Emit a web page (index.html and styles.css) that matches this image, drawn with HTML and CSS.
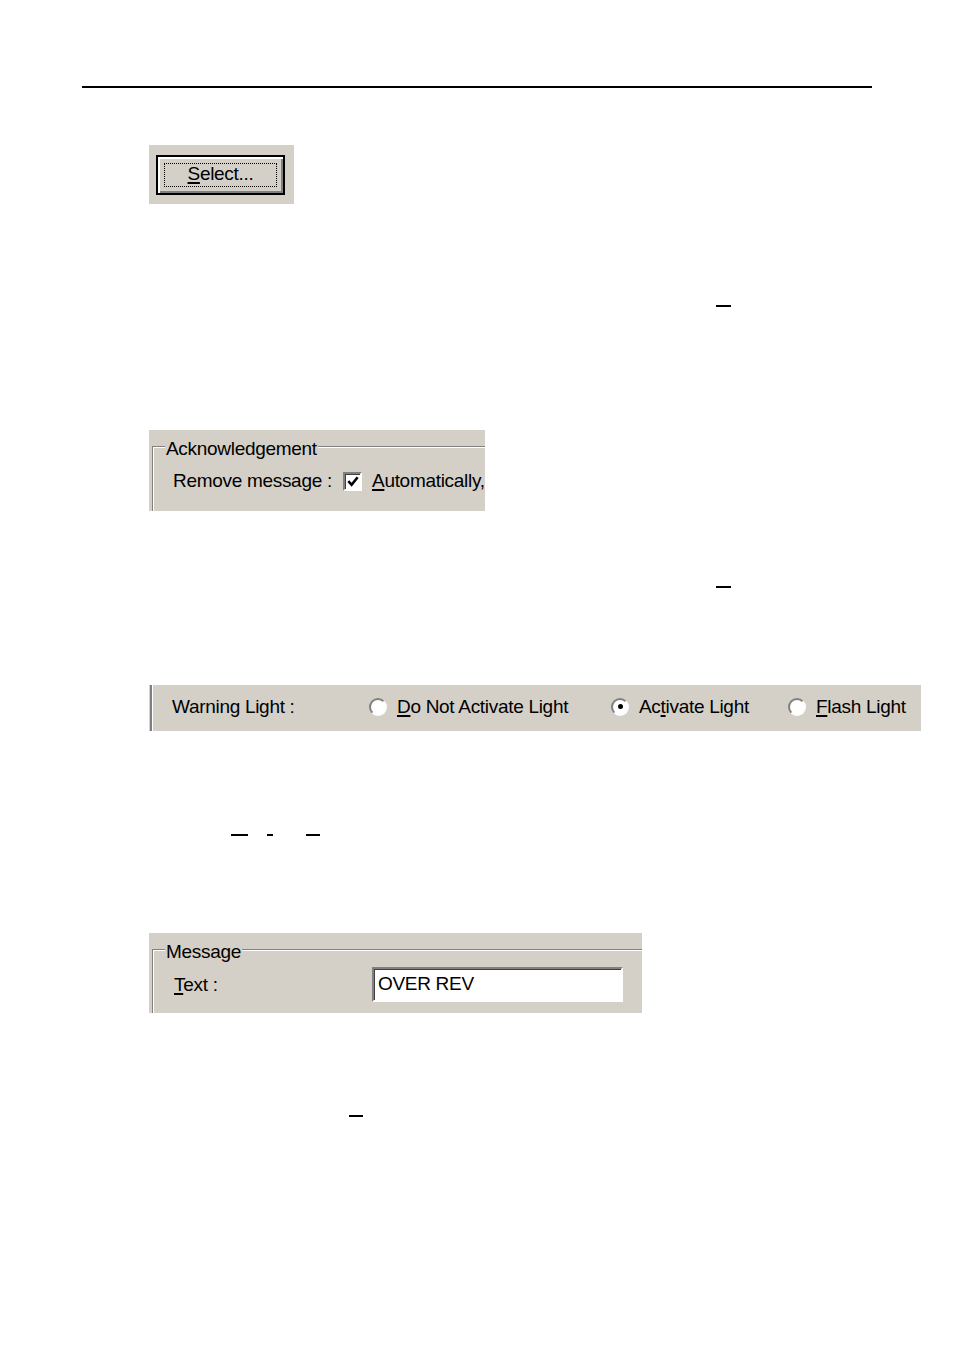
FILE: index.html
```html
<!DOCTYPE html>
<html lang="en">
<head>
<meta charset="utf-8">
<title>Dialog fragments</title>
<link rel="stylesheet" href="styles.css">
</head>
<body>
<div class="page">
  <div class="rule"></div>

  <div class="shot shot-select">
    <div class="btn">
      <div class="btn-focus"><span><u>S</u>elect...</span></div>
    </div>
  </div>

  <div class="marks marks-1"><span class="mark m-a"></span></div>

  <div class="shot shot-ack">
    <div class="group">
      <div class="legend">Acknowledgement</div>
      <div class="row row-ack">
        <span class="label label-ack">Remove message :</span>
        <span class="checkbox">
          <svg width="15" height="15" viewBox="0 0 15 15"><polyline points="2.5,7 6,11 12.5,3" fill="none" stroke="#000" stroke-width="2.8"/></svg>
        </span>
        <span class="check-text"><u>A</u>utomatically,</span>
      </div>
    </div>
  </div>

  <div class="marks marks-2"><span class="mark m-a"></span></div>

  <div class="shot shot-warning">
    <span class="label label-warn">Warning Light :</span>
    <span class="opt opt-1"><span class="radio"></span><span><u>D</u>o Not Activate Light</span></span>
    <span class="opt opt-2"><span class="radio on"></span><span>Ac<u>t</u>ivate Light</span></span>
    <span class="opt opt-3"><span class="radio"></span><span><u>F</u>lash Light</span></span>
  </div>

  <div class="marks marks-3">
    <span class="mark m-b1"></span><span class="mark m-b2"></span><span class="mark m-b3"></span>
  </div>

  <div class="shot shot-msg">
    <div class="group">
      <div class="legend">Message</div>
      <div class="row row-msg">
        <span class="label label-msg"><u>T</u>ext :</span>
        <span class="textbox">OVER REV</span>
      </div>
    </div>
  </div>

  <div class="marks marks-4"><span class="mark m-c"></span></div>
</div>
</body>
</html>
```

FILE: styles.css
```css
html, body {
  margin: 0;
  padding: 0;
  background: #fff;
}

.page {
  width: 954px;
  min-height: 1350px;
  overflow: hidden;
  font-family: "Liberation Sans", Arial, sans-serif;
  font-size: 19px;
  letter-spacing: -0.3px;
  line-height: 20px;
  color: #000;
}

u {
  text-decoration: underline;
  text-underline-offset: 2px;
  text-decoration-thickness: 1.5px;
}

.rule {
  margin: 86px 0 0 82px;
  width: 790px;
  height: 2px;
  background: #000;
}

.shot {
  background: #d4d0c8;
  box-sizing: border-box;
  overflow: hidden;
}

/* Select button */
.shot-select {
  margin: 57px 0 0 149px;
  width: 145px;
  height: 59px;
  padding: 10px 0 0 7px;
}

.btn {
  width: 129px;
  height: 40px;
  box-sizing: border-box;
  border: 2px solid #000;
  box-shadow: inset 2px 2px #fff, inset -2px -2px #808080;
  padding: 6px;
}

.btn-focus {
  height: 100%;
  box-sizing: border-box;
  border: 1px dotted #000;
  display: flex;
  align-items: center;
  justify-content: center;
  padding-bottom: 2px;
}

/* underline marks */
.marks {
  display: flex;
  height: 2px;
}
.mark {
  display: block;
  height: 2px;
  background: #000;
}
.marks-1 { margin-top: 101px; }
.marks-2 { margin-top: 75px; }
.marks-3 { margin-top: 103px; }
.marks-4 { margin-top: 102px; }

.m-a { margin-left: 716px; width: 15px; }
.m-b1 { margin-left: 231px; width: 17px; }
.m-b2 { margin-left: 19px; width: 6px; }
.m-b3 { margin-left: 33px; width: 14px; }
.m-c { margin-left: 349px; width: 14px; }

/* group boxes */
.group {
  margin: 16px 0 0 3px;
  width: 900px;
  height: 200px;
  border-top: 1px solid #808080;
  border-left: 1px solid #808080;
  box-shadow: inset 1px 1px #fff;
}

.legend {
  display: block;
  width: fit-content;
  margin: -8px 0 0 12px;
  padding: 0 1px;
  background: #d4d0c8;
  height: 20px;
}

.row {
  display: flex;
  align-items: center;
  margin-left: 20px;
}

.label {
  flex: none;
  white-space: nowrap;
}

/* Acknowledgement */
.shot-ack {
  margin: 123px 0 0 149px;
  width: 336px;
  height: 81px;
}

.row-ack {
  margin-top: 12px;
  height: 20px;
}
.label-ack { width: 170px; }

.checkbox {
  flex: none;
  width: 19px;
  height: 19px;
  box-sizing: border-box;
  border: 2px solid;
  border-color: #808080 #fff #fff #808080;
  box-shadow: inset 1px 1px #404040;
  background: #fff;
  display: flex;
  align-items: center;
  justify-content: center;
}
.checkbox svg { display: block; margin: 1px 0 0 1px; }

.check-text {
  margin-left: 10px;
  white-space: nowrap;
}

/* Warning light */
.shot-warning {
  margin: 97px 0 0 149px;
  width: 772px;
  height: 46px;
  background:
    linear-gradient(to right, transparent 1px, #808080 1px, #808080 3px, #fff 3px, #fff 4px, transparent 4px),
    #d4d0c8;
  display: flex;
  align-items: center;
  padding: 0 0 3px 23px;
}

.label-warn { width: 197px; }

.opt {
  flex: none;
  display: flex;
  align-items: center;
  white-space: nowrap;
}
.opt-1 { width: 242px; }
.opt-2 { width: 177px; }

.radio {
  flex: none;
  width: 18px;
  height: 18px;
  box-sizing: border-box;
  border-radius: 50%;
  border: 2px solid;
  border-color: #808080 #fff #fff #808080;
  background: #fff;
  margin-right: 10px;
  display: flex;
  align-items: center;
  justify-content: center;
}
.radio.on::after {
  content: "";
  width: 5px;
  height: 5px;
  border-radius: 50%;
  background: #000;
}

/* Message */
.shot-msg {
  margin: 97px 0 0 149px;
  width: 493px;
  height: 80px;
}

.row-msg {
  margin-top: 5px;
  margin-left: 21px;
}
.label-msg { width: 198px; }

.textbox {
  flex: none;
  width: 251px;
  height: 35px;
  box-sizing: border-box;
  border: 2px solid;
  border-color: #808080 #fff #fff #808080;
  box-shadow: inset 1px 1px #404040;
  background: #fff;
  padding: 0 0 2px 4px;
  display: flex;
  align-items: center;
  white-space: nowrap;
}
```
